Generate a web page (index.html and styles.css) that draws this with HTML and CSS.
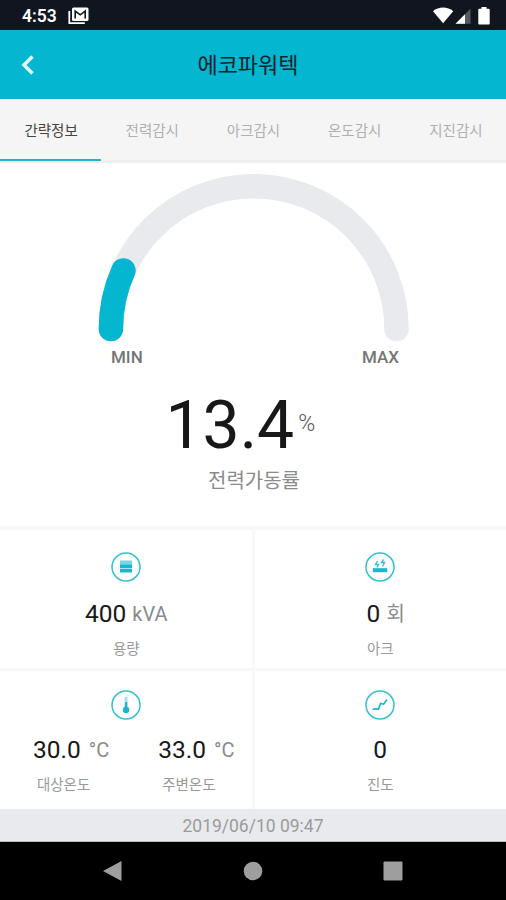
FILE: index.html
```html
<!DOCTYPE html>
<html lang="ko">
<head>
  <meta charset="UTF-8" />
  <meta name="viewport" content="width=device-width, initial-scale=1.0"/>
  <title>에코파워텍</title>
  <link rel="stylesheet" href="styles.css">
</head>
<body>
  <div class="statusbar">
    <span class="clock">4:53</span>
    <svg class="mail" width="21" height="18" viewBox="0 0 21 18">
      <path d="M1.3 4v12.2h15.5" fill="none" stroke="#fff" stroke-width="1.8"/>
      <rect x="4" y="0.5" width="16.5" height="13.5" rx="1.5" fill="#fff"/>
      <path d="M7.2 11.5V4l5 3.8 5-3.8v7.5" fill="none" stroke="#10151f" stroke-width="1.6"/>
    </svg>
    <svg class="signals" width="58" height="18" viewBox="0 0 58 18">
      <path d="M0 4.2C5.5-0.7 14.7-0.7 20.2 4.2L10.1 16.2Z" fill="#fff"/>
      <path d="M22.5 16.8L37.5 1.8v15Z" fill="#555a61"/>
      <path d="M22.5 16.8L32 7.3v9.5Z" fill="#fff"/>
      <path d="M48.5 0h5v1.7h2.2q1 0 1 1v13.8q0 1-1 1h-9.4q-1 0-1-1V2.7q0-1 1-1h2.2Z" fill="#fff"/>
    </svg>
  </div>

  <header class="header">
    <svg class="back" width="14" height="20" viewBox="0 0 14 20">
      <path d="M12.5 1.5L4 10l8.5 8.5" fill="none" stroke="#e0f8fc" stroke-width="3.6"/>
    </svg>
    <h1>에코파워텍</h1>
  </header>

  <nav class="tabs">
    <a class="tab active">간략정보</a>
    <a class="tab">전력감시</a>
    <a class="tab">아크감시</a>
    <a class="tab">온도감시</a>
    <a class="tab">지진감시</a>
  </nav>

  <section class="gauge">
    <svg class="arc" width="313" height="170" viewBox="0 0 313 170">
      <path d="M13.9 155a142.8 142.8 0 0 1 285.6 0" fill="none" stroke="#e8eaed" stroke-width="24.5" stroke-linecap="round"/>
      <path d="M13.9 155a142.8 142.8 0 0 1 12.5-58.5" fill="none" stroke="#04b6d0" stroke-width="24.5" stroke-linecap="round"/>
    </svg>
    <div class="range"><span>MIN</span><span>MAX</span></div>
    <div class="rate">13.4<span class="percent">%</span></div>
    <div class="rate-label">전력가동률</div>
  </section>

  <main class="grid">
    <div class="cell">
      <svg class="icon" width="30" height="30" viewBox="0 0 30 30">
        <circle cx="15" cy="15" r="14" fill="none" stroke="#35bfd5" stroke-width="1.5"/>
        <rect x="9" y="8.5" width="12" height="3.5" fill="#7bd5e3"/>
        <rect x="9" y="12.3" width="12" height="3.9" fill="#18b6cf"/>
        <rect x="9" y="16.8" width="12" height="3.7" fill="#18b6cf"/>
      </svg>
      <div class="value">400 <span class="unit">kVA</span></div>
      <div class="label">용량</div>
    </div>
    <div class="cell">
      <svg class="icon" width="30" height="30" viewBox="0 0 30 30">
        <circle cx="15" cy="15" r="14" fill="none" stroke="#35bfd5" stroke-width="1.5"/>
        <rect x="7.8" y="16.2" width="14.5" height="4" fill="#18b6cf"/>
        <path d="M12.5 9l-2 3.5h3l-1.500 3M18.500 7.500l-2 3h3l-2 4" fill="none" stroke="#35bfd5" stroke-width="1.4"/>
      </svg>
      <div class="value shift-arc">0 <span class="unit">회</span></div>
      <div class="label">아크</div>
    </div>
    <div class="cell">
      <svg class="icon" width="30" height="30" viewBox="0 0 30 30">
        <circle cx="15" cy="15" r="14" fill="none" stroke="#35bfd5" stroke-width="1.5"/>
        <rect x="13.6" y="6.5" width="3" height="12" rx="1.5" fill="#a3e1eb"/>
        <path d="M15.1 12v8" stroke="#18b6cf" stroke-width="2.2"/>
        <circle cx="15.1" cy="20" r="3.2" fill="#18b6cf"/>
      </svg>
      <div class="pair">
        <div>
          <div class="value shift-temp">30.0 <span class="unit">°C</span></div>
          <div class="label">대상온도</div>
        </div>
        <div>
          <div class="value shift-temp">33.0 <span class="unit">°C</span></div>
          <div class="label">주변온도</div>
        </div>
      </div>
    </div>
    <div class="cell">
      <svg class="icon" width="30" height="30" viewBox="0 0 30 30">
        <circle cx="15" cy="15" r="14" fill="none" stroke="#35bfd5" stroke-width="1.5"/>
        <path d="M7.500 19.500l3.500-.8 2.500.8 2-6 3.200.7 3.200-4.700" fill="none" stroke="#18b6cf" stroke-width="1.6"/>
      </svg>
      <div class="value">0</div>
      <div class="label">진도</div>
    </div>
  </main>

  <div class="date">2019/06/10 09:47</div>

  <footer class="navbar">
    <svg width="20" height="22" viewBox="0 0 20 22"><path d="M0 11L18.5 1v20Z" fill="#9e9e9e"/></svg>
    <svg width="20" height="20" viewBox="0 0 20 20"><circle cx="10" cy="10" r="9.3" fill="#9e9e9e"/></svg>
    <svg width="20" height="20" viewBox="0 0 20 20"><rect x="0.5" y="0.5" width="19" height="19" rx="1" fill="#9e9e9e"/></svg>
  </footer>
</body>
</html>
```
FILE: styles.css
```css
* {
  box-sizing: border-box;
}
body {
  margin: 0;
  height: 900px;
  display: flex;
  flex-direction: column;
  overflow: hidden;
  background: #fff;
  font-family: Roboto, "Noto Sans CJK KR", sans-serif;
}
.statusbar {
  height: 30px;
  flex: none;
  display: flex;
  align-items: center;
  padding: 1px 15px 0 22px;
  background: #10151f;
}
.clock {
  color: #fff;
  font-size: 17.5px;
  font-weight: 600;
  line-height: 20px;
}
.mail {
  margin-left: 11px;
}
.signals {
  margin-left: auto;
}
.header {
  height: 69px;
  flex: none;
  display: grid;
  grid-template-columns: 40px 1fr 40px;
  align-items: center;
  padding: 0 20px;
  background: #04b6d0;
}
h1 {
  margin: 2px 10px 0 0;
  text-align: center;
  color: #10232b;
  font-size: 22px;
  font-weight: 400;
  line-height: 30px;
}
.tabs {
  height: 64px;
  flex: none;
  display: grid;
  grid-template-columns: repeat(5, 1fr);
  background: #f5f5f5;
  border-bottom: 3px solid #eee;
}
.tab {
  height: 62px;
  padding-left: 1px;
  text-align: center;
  line-height: 65px;
  font-size: 14.5px;
  color: #b0b0b0;
}
.tab.active {
  color: #444;
  border-bottom: 2px solid #1fb5cc;
}
.gauge {
  height: 363px;
  flex: none;
  display: flex;
  flex-direction: column;
  align-items: center;
  padding-top: 11px;
}
.arc {
  display: block;
}
.range {
  width: 288px;
  display: flex;
  justify-content: space-between;
  margin-top: 3px;
  margin-left: 4px;
  line-height: 20px;
  font-size: 17px;
  font-weight: 500;
  color: #757575;
}
.rate {
  display: flex;
  align-items: flex-start;
  width: 130px;
  height: 76px;
  margin-top: 21px;
  margin-right: 45px;
  line-height: 76px;
  font-size: 66px;
  color: #181818;
}
.percent {
  margin-top: 24px;
  margin-left: 4px;
  line-height: 24px;
  font-size: 23px;
  font-weight: 300;
  color: #555;
}
.rate-label {
  margin-top: 3px;
  margin-left: 2px;
  font-size: 20px;
  line-height: 28px;
  color: #8b8b8b;
}
.grid {
  flex: none;
  display: grid;
  grid-template-columns: 1fr 1fr;
  grid-template-rows: 138px 138px;
  gap: 3px;
  padding-top: 4px;
  background: #f8f8f8;
}
.cell {
  display: flex;
  flex-direction: column;
  align-items: center;
  padding-top: 22px;
  padding-left: 1px;
  background: #fff;
}
.cell:nth-child(even) {
  padding-left: 0;
}
.cell:nth-child(n+3) {
  padding-top: 19px;
}
.icon {
  display: block;
  flex: none;
}
.value {
  margin-top: 17px;
  height: 30px;
  text-align: center;
  line-height: 30px;
  font-size: 24.5px;
  color: #181818;
  white-space: nowrap;
}
.cell:nth-child(n+3) .value {
  margin-top: 15px;
}
.shift-arc {
  padding-left: 11px;
}
.shift-temp {
  padding-left: 15px;
}
.shift-temp .unit {
  margin-left: 2px;
}
.unit {
  font-size: 20px;
  vertical-align: 1px;
  color: #8a8a8a;
}
.label {
  margin-top: 11px;
  text-align: center;
  font-size: 14.5px;
  line-height: 20px;
  color: #999;
}
.pair {
  width: 100%;
  display: grid;
  grid-template-columns: 1fr 1fr;
}
.date {
  height: 33px;
  flex: none;
  text-align: center;
  background: #e8eaed;
  border-bottom: 1px solid #bbb;
  line-height: 34px;
  font-size: 17.5px;
  color: #9b9b9b;
}
.navbar {
  flex: 1;
  display: flex;
  justify-content: space-between;
  align-items: center;
  padding: 0 103px;
  background: #000;
}
```
